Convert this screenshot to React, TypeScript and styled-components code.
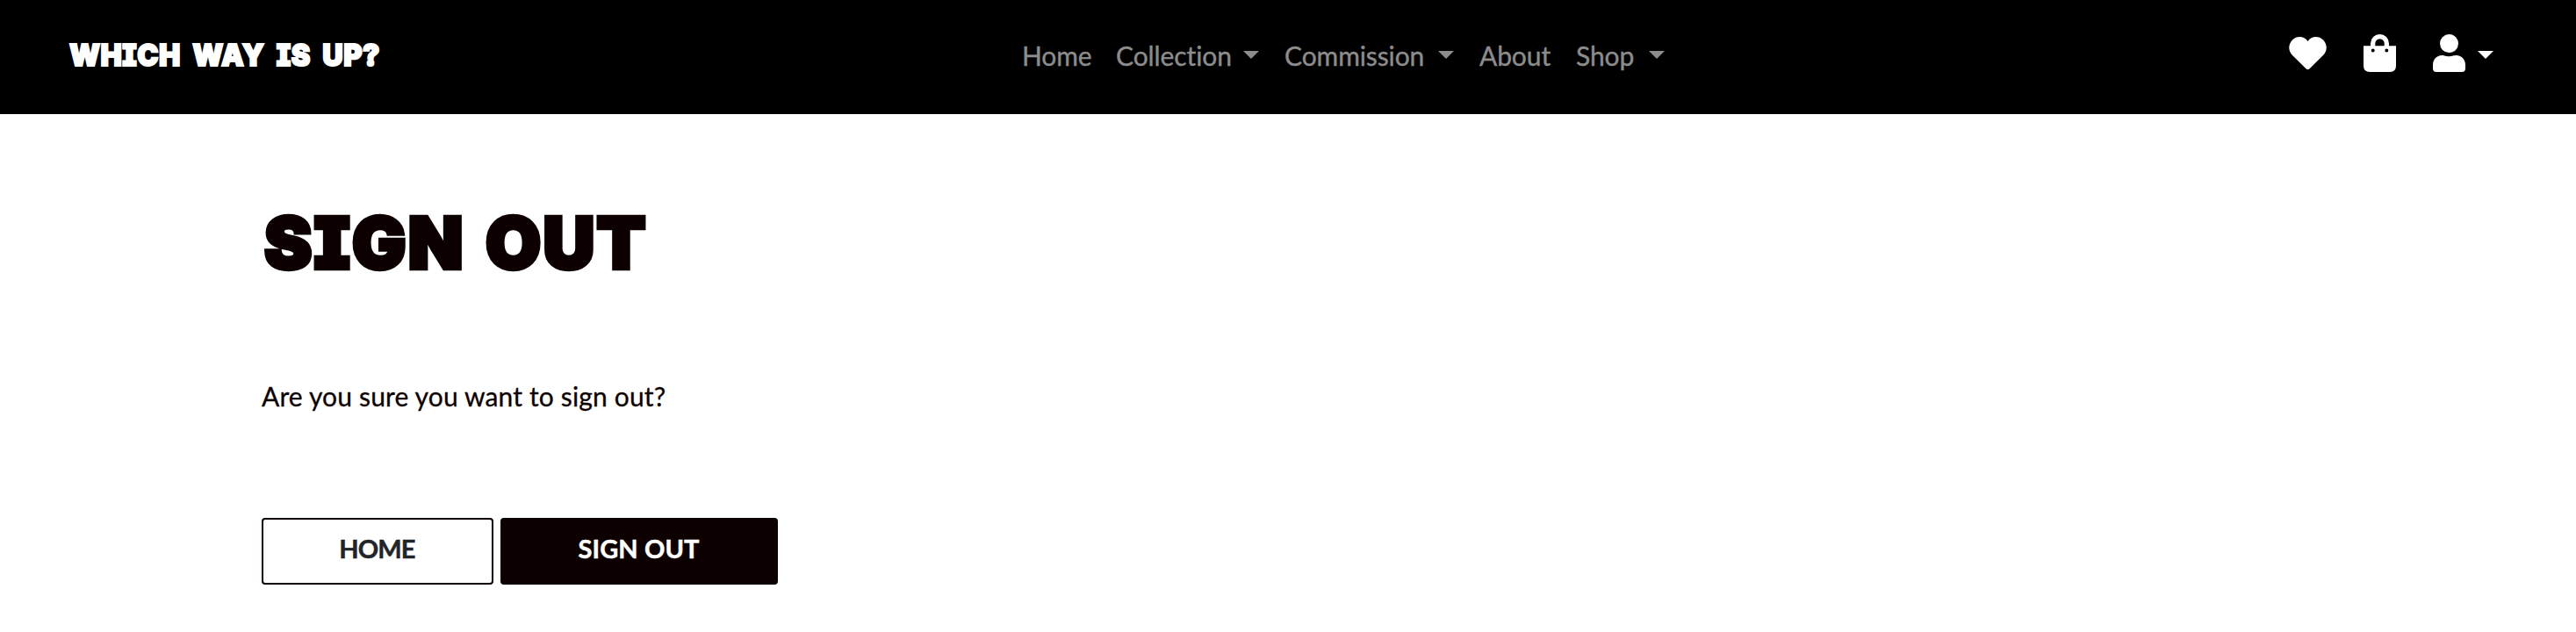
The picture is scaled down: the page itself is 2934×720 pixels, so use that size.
import React from 'react';
import styled, { createGlobalStyle } from 'styled-components';

const GlobalStyle = createGlobalStyle`
  *, *::before, *::after { box-sizing: border-box; }
  body { margin: 0; background: #fff; color: #0d0000; font-family: Lato, sans-serif; font-variant-ligatures: none; }
`;

const Navbar = styled.nav`
  height: 130px;
  padding: 0 94px 0 79px;
  display: grid;
  grid-template-columns: 1085px 1fr auto;
  background: #000;
`;

const Brand = styled.a`
  justify-self: start;
  padding: 40px 0 0;
  color: #fff;
  font: 900 34.5px/45px Inter, sans-serif;
  font-feature-settings: 'cv08';
  letter-spacing: 0.5px;
  word-spacing: 7px;
  -webkit-text-stroke: 2px #fff;
  white-space: nowrap;
  transform: scaleX(0.94);
  transform-origin: left;
`;

const Menu = styled.div`
  display: flex;
  align-items: flex-start;
  padding-top: 45px;
`;

const MenuItem = styled.a<{ $width: number }>`
  width: ${({ $width }) => $width}px;
  display: flex;
  justify-content: space-between;
  margin-right: 29px;
  color: #8c8c8c;
  font-size: 30px;
  line-height: 37px;
  letter-spacing: -0.1px;
  -webkit-text-stroke: 0.4px #8c8c8c;
  white-space: nowrap;
`;

const Caret = styled.span<{ $light?: boolean }>`
  width: 18px;
  height: 9px;
  margin-top: 13px;
  background: ${({ $light }) => ($light ? '#fff' : '#8c8c8c')};
  clip-path: polygon(0 0, 100% 0, 50% 100%);
`;

const Actions = styled.div`
  display: flex;
  gap: 42px;
  padding-top: 39px;
`;

const Action = styled.a`
  display: flex;
`;

const Icon = styled.svg`
  display: block;
  height: 43px;
  fill: #fff;
`;

const AccountCaret = styled.span`
  padding: 6px 0 0 14px;
`;

const Content = styled.main`
  padding: 105px 298px 0;
`;

const Heading = styled.h1`
  margin: 0;
  padding-left: 3px;
  font: 900 81.5px/84px Inter, sans-serif;
  font-feature-settings: 'cv08';
  letter-spacing: 2.2px;
  word-spacing: 5px;
  -webkit-text-stroke: 4.5px #0d0000;
  stroke-linejoin: round;
`;

const Message = styled.p`
  margin: 114px 0 121px;
  font-size: 30px;
  line-height: 36px;
  letter-spacing: 0.15px;
  -webkit-text-stroke: 0.3px #0d0000;
`;

const Buttons = styled.div`
  display: flex;
  gap: 8px;
`;

const Button = styled.button<{ $primary?: boolean }>`
  width: ${({ $primary }) => ($primary ? 316 : 264)}px;
  height: 76px;
  padding: 0 1px 7px 0;
  border: 2px solid #0d0000;
  border-radius: 4px;
  background: ${({ $primary }) => ($primary ? '#0d0000' : '#fff')};
  color: ${({ $primary }) => ($primary ? '#fff' : '#212529')};
  font: 700 29px Lato, sans-serif;
  letter-spacing: ${({ $primary }) => ($primary ? 0.1 : -0.9)}px;
  -webkit-text-stroke: 0.5px currentColor;
`;

const links = [
  { label: 'Home', width: 78 },
  { label: 'Collection', width: 163, menu: true },
  { label: 'Commission', width: 193, menu: true },
  { label: 'About', width: 81 },
  { label: 'Shop', width: 101, menu: true },
];

export default function App() {
  return (
    <>
      <GlobalStyle />
      <Navbar>
        <Brand>WHICH WAY IS UP?</Brand>
        <Menu>
          {links.map(({ label, width, menu }) => (
            <MenuItem key={label} $width={width}>
              <span>{label}</span>
              {menu && <Caret />}
            </MenuItem>
          ))}
        </Menu>
        <Actions>
          <Action aria-label="Wishlist">
            <Icon width="43" viewBox="0 0 43 43">
              <path d="M21.5 8C17.5 2 9 1.500 4 6.500C-1 11.500-1 19 4 24L19.500 39.200Q21.500 41 23.500 39.200L39 24C44 19 44 11.500 39 6.500C34 1.500 25.500 2 21.500 8Z" />
            </Icon>
          </Action>
          <Action aria-label="Bag">
            <Icon width="37" viewBox="0 0 37 43">
              <path fillRule="evenodd" d="M0 13.300H8V10.500A10.500 10.500 0 0 1 29 10.500V13.300H37V36Q37 43 30 43H7Q0 43 0 36ZM13.300 13.300H23.700V10.500A5.200 5.200 0 0 0 13.300 10.500ZM8.700 18.600A2 2 0 1 0 12.700 18.600A2 2 0 1 0 8.700 18.600ZM24.300 18.600A2 2 0 1 0 28.300 18.600A2 2 0 1 0 24.300 18.600Z" />
            </Icon>
          </Action>
          <Action aria-label="Account">
            <Icon width="37" viewBox="0 0 37 43">
              <circle cx="18.500" cy="10.600" r="10.500" />
              <path d="M10.500 24C13.500 24 14.500 25.300 18.500 25.300S23.500 24 26.500 24C33 24 37 29 37 35V39Q37 43 33 43H4Q0 43 0 39V35C0 29 4 24 10.500 24Z" />
            </Icon>
            <AccountCaret><Caret as="div" $light /></AccountCaret>
          </Action>
        </Actions>
      </Navbar>
      <Content>
        <Heading>SIGN OUT</Heading>
        <Message>Are you sure you want to sign out?</Message>
        <Buttons>
          <Button>HOME</Button>
          <Button $primary>SIGN OUT</Button>
        </Buttons>
      </Content>
    </>
  );
}
